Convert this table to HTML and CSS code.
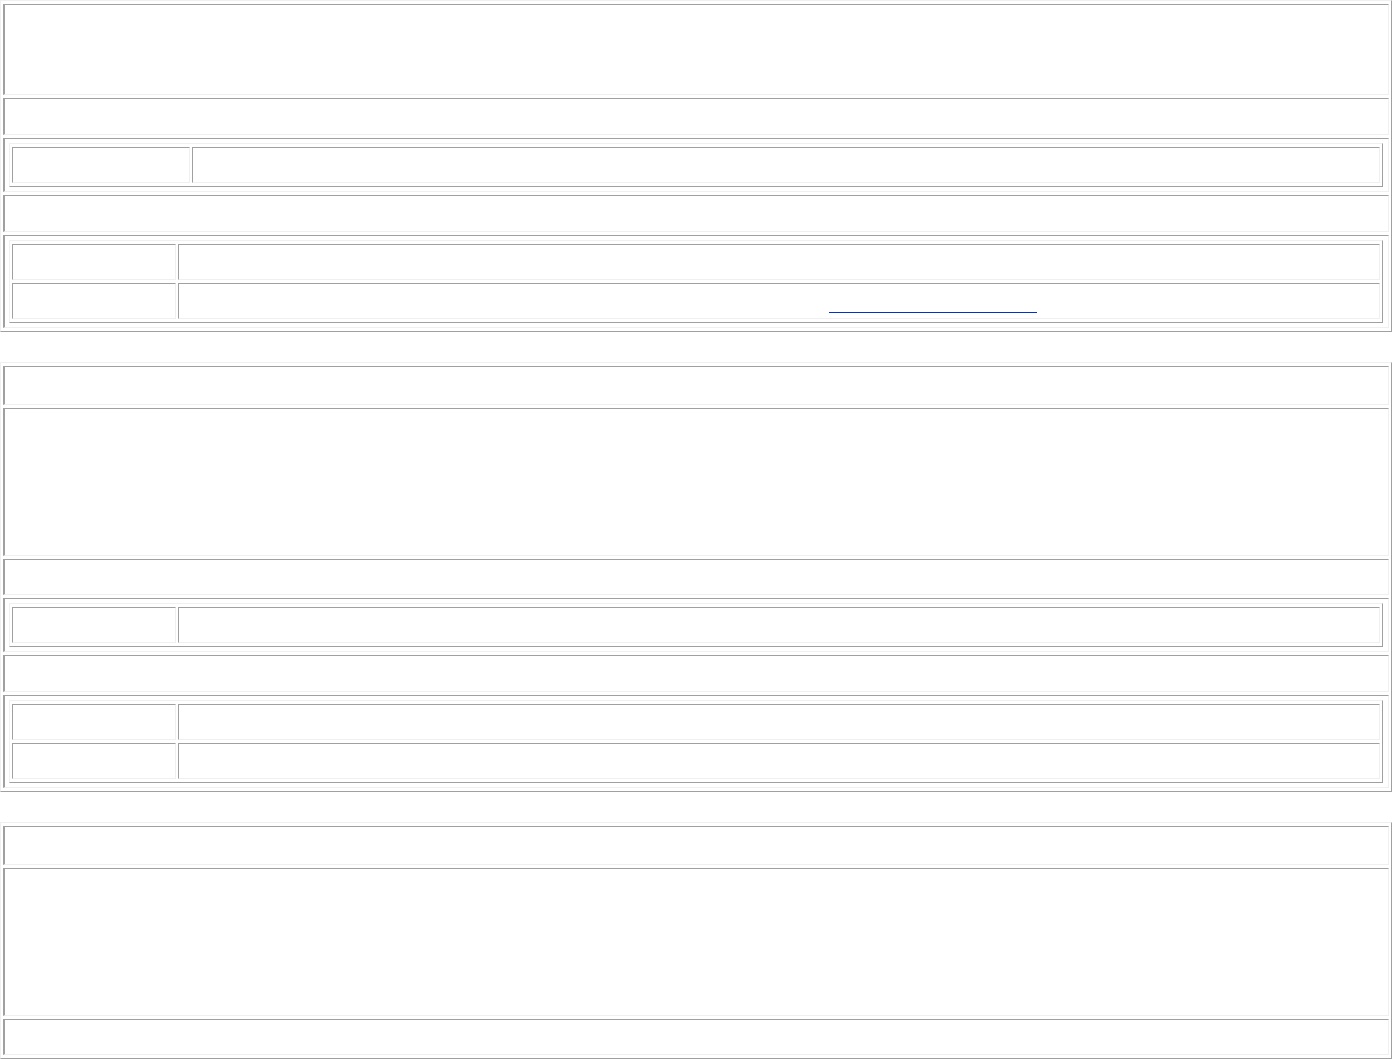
FILE: index.html
```html
<!DOCTYPE html>
<html lang="en">
  <head>
    <meta charset="UTF-8" />
    <meta name="viewport" content="width=device-width, initial-scale=1.0" />
    <title>Details</title>
    <link rel="stylesheet" href="styles.css">
  </head>
  <body>
    <table class="panel">
      <tr><td class="cell-banner"></td></tr>
      <tr><td class="cell-line"></td></tr>
      <tr>
        <td class="cell-nest">
          <table class="grid">
            <tr><td class="label label-wide"></td><td class="value"></td></tr>
          </table>
        </td>
      </tr>
      <tr><td class="cell-line"></td></tr>
      <tr>
        <td class="cell-nest">
          <table class="grid">
            <tr><td class="label"></td><td class="value"></td></tr>
            <tr>
              <td class="label"></td>
              <td class="value"><a class="site" href="#" aria-label="website"></a></td>
            </tr>
          </table>
        </td>
      </tr>
    </table>

    <table class="panel">
      <tr><td class="cell-head"></td></tr>
      <tr><td class="cell-body"></td></tr>
      <tr><td class="cell-row"></td></tr>
      <tr>
        <td class="cell-nest">
          <table class="grid">
            <tr><td class="label"></td><td class="value"></td></tr>
          </table>
        </td>
      </tr>
      <tr><td class="cell-line"></td></tr>
      <tr>
        <td class="cell-nest">
          <table class="grid">
            <tr><td class="label"></td><td class="value"></td></tr>
            <tr><td class="label"></td><td class="value"></td></tr>
          </table>
        </td>
      </tr>
    </table>

    <table class="panel">
      <tr><td class="cell-head"></td></tr>
      <tr><td class="cell-body"></td></tr>
      <tr><td class="cell-row"></td></tr>
    </table>
  </body>
</html>
```

FILE: styles.css
```css
body {
  margin: 0;
  font-family: "Liberation Serif", serif;
  font-size: 16px;
  background: #fff;
}

/* outset tables, inset cells */
.panel,
.grid {
  width: 100%;
  border-collapse: separate;
  border-spacing: 2px 3px;
  border: 1px solid;
  border-color: #f0f0f0 #a0a0a0 #a0a0a0 #f0f0f0;
}
.panel + .panel {
  margin-top: 30px;
}
.panel td {
  box-sizing: border-box;
  padding: 0;
  border: 1px solid;
  border-color: #a0a0a0 #f0f0f0 #f0f0f0 #a0a0a0;
}
.panel > tbody > tr > td {
  border-left-width: 2px;
}

.cell-banner {
  height: 91px;
}
.cell-head {
  height: 39px;
}
.cell-body {
  height: 148px;
}
.cell-line {
  height: 37px;
}
.cell-row {
  height: 36px;
}
.panel td.cell-nest {
  padding: 4px 5px 4px 4px;
}

.grid td {
  height: 36px;
  vertical-align: top;
}
.grid .label {
  width: 164px;
}
.grid .label-wide {
  width: 178px;
}

.site {
  display: block;
  width: 208px;
  height: 28px;
  margin-left: 650px;
  border-bottom: 1px solid #0033cc;
}
```
